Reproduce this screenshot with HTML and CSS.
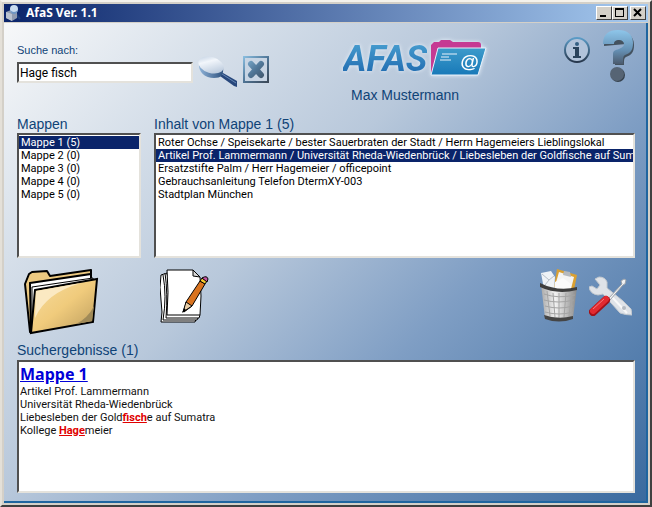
FILE: index.html
```
<!DOCTYPE html>
<html lang="de">
  <head>
    <meta charset="UTF-8" />
    <meta name="viewport" content="width=device-width, initial-scale=1.0" />
    <title>AfaS Ver. 1.1</title>
    <link rel="stylesheet" href="styles.css">
  </head>
  <body>
    <div class="window">
      <header class="titlebar">
        <svg class="app-icon" width="16" height="16" viewBox="0 0 16 16">
          <path d="M9 8l5 6" stroke="#1c3f7c" stroke-width="2" />
          <path d="M0 7l5-2 6 2v6l-5 3-6-3z" fill="#8f9bb0" />
          <path d="M0 7l6 2v7l-6-3z" fill="#b9c2d0" />
          <ellipse cx="8" cy="4" rx="4" ry="4" fill="#c9dcf0" />
          <path d="M4 5q4 4 8 0q-1 4-4 4t-4-4z" fill="#6f97c4" />
        </svg>
        <h1>AfaS Ver. 1.1</h1>
        <div class="window-buttons">
          <button type="button" aria-label="Minimieren">
            <svg width="12" height="10" viewBox="0 0 12 10"><path d="M2 7h6v2H2z" /></svg>
          </button>
          <button type="button" aria-label="Maximieren">
            <svg width="12" height="10" viewBox="0 0 12 10"><path d="M1 0h9v9H1zM2 2v6h7V2z" fill-rule="evenodd" /></svg>
          </button>
          <button type="button" class="close" aria-label="Schließen">
            <svg width="12" height="10" viewBox="0 0 12 10"><path d="M2 1l7 7M9 1L2 8" stroke="#000" stroke-width="2" /></svg>
          </button>
        </div>
      </header>

      <main class="content">
        <div class="top">
          <form class="search">
            <div class="search-field">
              <label for="search">Suche nach:</label>
              <input type="text" id="search" value="Hage fisch" autofocus />
            </div>
            <button type="button" class="icon-button" aria-label="Suchen">
              <svg width="40" height="32" viewBox="0 0 40 32">
                <defs>
                  <linearGradient id="lens" x1="0" y1="0" x2="1" y2="1">
                    <stop offset="0" stop-color="#b4c6dc" />
                    <stop offset=".35" stop-color="#f2f6fb" />
                    <stop offset="1" stop-color="#a9bcd3" />
                  </linearGradient>
                  <linearGradient id="rim" x1="0" y1="0" x2="1" y2="0">
                    <stop offset="0" stop-color="#8fb3d8" />
                    <stop offset="1" stop-color="#2e527f" />
                  </linearGradient>
                </defs>
                <path d="M22 18l3-1 14 8v6l-3-1-14-10z" fill="#27477c" />
                <path d="M24 18l14 9" stroke="#6587b3" stroke-width="1" />
                <path d="M1 7c-1 9 6 15 15 15 7 0 10-3 9-11z" fill="url(#rim)" />
                <ellipse cx="13" cy="9" rx="13" ry="8" transform="rotate(17 13 9)" fill="url(#lens)" />
              </svg>
            </button>
            <button type="button" class="icon-button" aria-label="Suche löschen">
              <svg width="26" height="27" viewBox="0 0 26 27">
                <defs>
                  <linearGradient id="steel" gradientUnits="userSpaceOnUse" x1="0" y1="0" x2="26" y2="27">
                    <stop offset="0" stop-color="#8cc0e2" />
                    <stop offset=".5" stop-color="#4f7596" />
                    <stop offset="1" stop-color="#3b4654" />
                  </linearGradient>
                </defs>
                <rect x="1" y="1" width="24" height="25" fill="#c8d5e4" stroke="url(#steel)" stroke-width="2" />
                <path d="M8 8l10 11M18 8L8 19" stroke="url(#steel)" stroke-width="6" stroke-linecap="round" />
              </svg>
            </button>
          </form>

          <div class="brand">
            <div class="logo">
              <span class="logo-text">AFAS</span>
              <svg width="60" height="40" viewBox="0 0 60 40">
                <defs>
                  <linearGradient id="folderBlue" x1="0" y1="0" x2="0" y2="1">
                    <stop offset="0" stop-color="#3d9bcb" />
                    <stop offset="1" stop-color="#1879b8" />
                  </linearGradient>
                </defs>
                <path d="M3 34V6l3-3h5l2-2h9l3 2h25q3 0 3 3v6" fill="#c63a93" />
                <path d="M10 9h48l-8 27H3z" fill="url(#folderBlue)" stroke="#e8f1fa" stroke-width="1" stroke-linejoin="round" />
                <path d="M14 15h15M13 18h8M12 21h11" stroke="#e8f1fa" stroke-width="1" />
                <text class="at" x="32" y="29">@</text>
              </svg>
            </div>
            <p class="user">Max Mustermann</p>
          </div>

          <div class="help">
            <button type="button" class="icon-button" aria-label="Information">
              <svg width="28" height="28" viewBox="0 0 28 28">
                <defs>
                  <linearGradient id="info" x1="0" y1="0" x2="0" y2="1">
                    <stop offset="0" stop-color="#5b9cc7" />
                    <stop offset="1" stop-color="#27374c" />
                  </linearGradient>
                </defs>
                <circle cx="14" cy="14" r="12" fill="#b1c3da" stroke="url(#info)" stroke-width="2" />
                <circle cx="14" cy="8" r="2" fill="#345f82" />
                <path d="M10 11h6v9h2v2h-8v-2h2v-7h-2z" fill="#2a435c" />
              </svg>
            </button>
            <button type="button" class="icon-button" aria-label="Hilfe">
              <svg width="33" height="53" viewBox="0 0 33 53">
                <defs>
                  <linearGradient id="question" x1="0" y1="0" x2="0" y2="1">
                    <stop offset="0" stop-color="#8ec6ea" />
                    <stop offset=".6" stop-color="#648fb3" />
                    <stop offset="1" stop-color="#4c5b6e" />
                  </linearGradient>
                </defs>
                <path d="M2 16C2 5 8 2 17 2s15 4 15 13c0 8-3 10-8 12-2 1-2 3-2 8h-9V25c0-3 2-4 6-5 4-2 5-3 5-6z" fill="#44525f" />
                <path d="M1 14C1 4 7 0 16 0s15 4 15 13c0 8-3 10-8 12-2 1-2 3-2 9H11V24c0-3 2-4 6-5 4-2 5-3 5-5s-2-4-5-4-5 1-5 4z" fill="url(#question)" />
                <circle cx="16" cy="45" r="7" fill="#35414d" />
                <circle cx="15" cy="44" r="7" fill="#566474" />
              </svg>
            </button>
          </div>
        </div>

        <div class="lists">
          <section class="folders">
            <label for="mappen">Mappen</label>
            <select id="mappen" size="9">
              <option selected>Mappe 1 (5)</option>
              <option>Mappe 2 (0)</option>
              <option>Mappe 3 (0)</option>
              <option>Mappe 4 (0)</option>
              <option>Mappe 5 (0)</option>
            </select>
          </section>
          <section class="entries">
            <label for="inhalt">Inhalt von Mappe 1 (5)</label>
            <select id="inhalt" size="9">
              <option>Roter Ochse / Speisekarte / bester Sauerbraten der Stadt / Herrn Hagemeiers Lieblingslokal</option>
              <option selected>Artikel Prof. Lammermann / Universität Rheda-Wiedenbrück / Liebesleben der Goldfische auf Sumatra</option>
              <option>Ersatzstifte Palm / Herr Hagemeier / officepoint</option>
              <option>Gebrauchsanleitung Telefon DtermXY-003</option>
              <option>Stadtplan München</option>
            </select>
          </section>
        </div>

        <div class="tools">
          <button type="button" class="icon-button tool-folder" aria-label="Neue Mappe">
            <svg width="76" height="66" viewBox="0 0 76 66">
              <defs>
                <linearGradient id="manila" x1="0" y1="0" x2="1" y2="1">
                  <stop offset="0" stop-color="#f8dda0" />
                  <stop offset=".5" stop-color="#f0cb7c" />
                  <stop offset="1" stop-color="#b99a5c" />
                </linearGradient>
              </defs>
              <path d="M6 63L1 15l4-10 3-2 15-1 3 5 41-6v10z" fill="#ecc981" stroke="#000" stroke-width="2" stroke-linejoin="round" />
              <path d="M6 14l61-9v12L7 62z" fill="#fff" stroke="#000" stroke-width="2" />
              <path d="M8 18l61-9v8L8 58z" fill="#fff" stroke="#000" stroke-width="1" />
              <path d="M11 21l62-11-4 43L7 64z" fill="url(#manila)" stroke="#000" stroke-width="2" />
              <path d="M12 22l45-8Q22 24 11 49z" fill="#fbe9c2" />
              <path d="M70 37l-2 15-16 3q12-6 18-18z" fill="#a08a58" />
            </svg>
          </button>
          <button type="button" class="icon-button tool-note" aria-label="Neuer Eintrag">
            <svg width="49" height="54" viewBox="0 0 49 54">
              <path d="M1 6l6-2 2 44 28-1-2 6H1q2-9 0-22t0-25z" fill="#fff" stroke="#000" stroke-width="1" />
              <path d="M3 6q4 21 0 45h34l2-4" fill="#fff" stroke="#000" stroke-width="1" />
              <path d="M5 4q3 20 1 45h33l1-3" fill="#fff" stroke="#000" stroke-width="1" />
              <path d="M7 1h26l7 7q2 19 0 38H7Q9 23 7 1z" fill="#fff" stroke="#000" stroke-width="1" />
              <path d="M33 1v6l7 1z" fill="#d8d8d8" stroke="#000" stroke-width="1" />
              <path d="M26 33l14-21 5 3-13 22-8 6z" fill="#d9731f" stroke="#000" stroke-width="1" />
              <path d="M26 33l6 4-9 6z" fill="#e9cda5" stroke="#000" stroke-width="1" />
              <path d="M24 39l2 2-4 3z" />
              <path d="M40 12l2-3 5 3-2 3z" fill="#f5c82c" stroke="#000" stroke-width="1" />
              <path d="M42 9q5-3 6 1l-1 3z" fill="#c355a2" stroke="#000" stroke-width="1" />
            </svg>
          </button>
          <button type="button" class="icon-button tool-trash" aria-label="Löschen">
            <svg width="38" height="53" viewBox="0 0 38 53">
              <defs>
                <linearGradient id="basket" x1="0" y1="0" x2="1" y2="0">
                  <stop offset="0" stop-color="#a9a9a9" />
                  <stop offset=".4" stop-color="#f1f1f1" />
                  <stop offset="1" stop-color="#8a8a8a" />
                </linearGradient>
              </defs>
              <path d="M17 0l20 6-3 15-20-3z" fill="#d9a032" />
              <path d="M19 3l15 5-3 12-16-3z" fill="#f4f4f4" />
              <path d="M24 2l6 1 1 5-8-2z" fill="#b5b9be" />
              <path d="M1 4l10-2 4 6-1 12H4z" fill="#eef2f6" />
              <path d="M2 5l7 6 5-4M5 16l4-5" stroke="#b6bec7" fill="none" />
              <path d="M15 13l8-4 8 6v8H14z" fill="#fafafa" />
              <path d="M1 15q18 11 36 3l-4 31q-14 6-28 0z" fill="url(#basket)" />
              <path d="M0 14q18 9 37 4v3q-20 5-37-3z" fill="#3d3d3d" />
              <path d="M4 25q14 5 31 1M4 31q14 4 30 0M5 37q14 4 28 0M5 43q14 4 28 0M7 22l3 25M13 24l2 24M19 24v25M26 24l-2 24M32 23l-3 24" stroke="#a4a4a4" fill="none" />
              <path d="M4 46q14 5 29 1v3q-14 5-28 0z" fill="#454545" />
            </svg>
          </button>
          <button type="button" class="icon-button tool-settings" aria-label="Einstellungen">
            <svg width="43" height="40" viewBox="0 0 43 40">
              <path d="M10 1L6 3l5 6-3 4-5-3-3 1q1 7 9 8l5-1 17 19q5 2 12 2l-1-6-8-8L18 12V6q-2-5-8-5z" fill="#dfe3e8" stroke="#c2c8ce" stroke-width="1" />
              <path d="M22 20l16 17" stroke="#f8f8f8" stroke-width="2" />
              <circle cx="35" cy="32" r="2" fill="#b4bac1" />
              <path d="M19 23L33 8l-1-3 3-2 2 1-1 4-2 1-13 15z" fill="#f2f2f2" stroke="#9aa2ab" stroke-width="1" />
              <path d="M4 36l13-12" stroke="#a31018" stroke-width="8" stroke-linecap="round" />
              <path d="M4 35l13-12" stroke="#e22a31" stroke-width="6" stroke-linecap="round" />
              <path d="M4 33l11-10" stroke="#f3797c" stroke-width="1" />
            </svg>
          </button>
        </div>

        <section class="results">
          <h2>Suchergebnisse (1)</h2>
          <div class="result-box">
            <a href="#mappen">Mappe 1</a>
            <p>Artikel Prof. Lammermann</p>
            <p>Universität Rheda-Wiedenbrück</p>
            <p>Liebesleben der Gold<mark>fisch</mark>e auf Sumatra</p>
            <p>Kollege <mark>Hage</mark>meier</p>
          </div>
        </section>
      </main>
    </div>
  </body>
</html>
```

FILE: styles.css
```
* {
  box-sizing: border-box;
}

body {
  margin: 0;
  font-family: "Liberation Sans", Arial, sans-serif;
  font-size: 11px;
  color: #0f4377;
}

h1, h2, p {
  margin: 0;
}

.window {
  display: flex;
  flex-direction: column;
  min-height: 100vh;
  padding: 2px;
  background: #d4d0c8;
  border: 2px solid;
  border-color: #f4f2ec #404040 #404040 #e4e0d8;
}

/* Titelleiste */
.titlebar {
  display: flex;
  align-items: center;
  gap: 4px;
  height: 18px;
  padding: 0 2px;
  background: linear-gradient(to right, #0a246a, #a6caf0);
}

.titlebar h1 {
  font-family: "Noto Sans", Tahoma, sans-serif;
  font-size: 12px;
  line-height: 18px;
  color: #fff;
}

.window-buttons {
  display: flex;
  margin-left: auto;
}

.window-buttons button {
  display: flex;
  width: 16px;
  height: 14px;
  padding: 1px;
  background: #d4d0c8;
  border: 1px solid;
  border-color: #fff #404040 #404040 #fff;
}

.window-buttons .close {
  margin-left: 2px;
}

.content {
  display: flex;
  flex: 1;
  flex-direction: column;
  margin-top: 1px;
  padding: 7px 11px 8px 13px;
  background: linear-gradient(135deg, #f7f8f9 0%, #dbe3ec 18%, #b8c8db 42%, #7f9ec4 65%, #3a6a9f 100%);
  border: solid #1f659f;
  border-width: 0 2px 2px 0;
}

.icon-button {
  display: block;
  flex: none;
  padding: 0;
  background: none;
  border: none;
  cursor: pointer;
}

.icon-button svg {
  display: block;
}

/* Kopfbereich */
.top {
  display: flex;
  height: 85px;
}

.search {
  display: flex;
  align-items: flex-start;
  gap: 5px;
  padding-top: 12px;
}

.search .icon-button {
  margin-top: 14px;
}

.search-field {
  width: 176px;
}

.search-field label {
  display: block;
  margin-bottom: 4px;
  line-height: 16px;
}

.search-field input {
  display: block;
  width: 100%;
  height: 21px;
  padding: 0 1px;
  font-family: Roboto, sans-serif;
  font-size: 12px;
  background: #fff;
  border: 2px solid;
  border-color: #505050 #e4e2dc #e4e2dc #505050;
  outline: none;
}

.brand {
  margin-left: 74px;
  padding-top: 9px;
}

.logo {
  display: flex;
  align-items: center;
  gap: 1px;
  filter: drop-shadow(0 0 2px #e8f1fa);
}

.logo-text {
  font-family: Roboto, sans-serif;
  font-size: 36px;
  font-weight: bold;
  font-style: italic;
  line-height: 40px;
  color: transparent;
  background: linear-gradient(#4ba3d3, #1a63ab);
  background-clip: text;
}

.at {
  font-size: 19px;
  font-weight: bold;
  font-style: italic;
  fill: #fff;
}

.user {
  padding-left: 8px;
  font-size: 14px;
  line-height: 32px;
}

.help {
  display: flex;
  align-items: flex-start;
  gap: 11px;
  margin-left: auto;
}

.help .icon-button:first-child {
  margin-top: 6px;
}

/* Listen */
.lists {
  display: flex;
  gap: 13px;
}

.folders {
  width: 124px;
}

.entries {
  flex: 1;
  min-width: 0;
}

.lists label,
.results h2 {
  display: block;
  font-size: 14px;
  font-weight: normal;
  line-height: 18px;
}

.lists select {
  display: block;
  width: 100%;
  height: 125px;
  padding: 1px 0;
  overflow: hidden;
  font-family: Roboto, sans-serif;
  font-size: 11px;
  color: #000;
  background: #fff;
  border: 2px solid;
  border-color: #505050 #e4e2dc #e4e2dc #505050;
  border-radius: 0;
  outline: none;
}

.lists option {
  min-height: 13px;
  padding: 0 2px;
  line-height: 13px;
}

.lists option:checked {
  color: #fff;
  background: #0a246a linear-gradient(#0a246a, #0a246a);
}

/* Werkzeuge */
.tools {
  display: flex;
  align-items: flex-start;
  height: 82px;
  padding: 11px 3px 0 7px;
}

.tool-note {
  margin-left: 60px;
}

.tool-trash {
  margin-left: auto;
}

.tool-settings {
  margin: 7px 0 0 11px;
}

/* Suchergebnisse */
.results {
  display: flex;
  flex: 1;
  flex-direction: column;
}

.results h2 {
  line-height: 20px;
}

.result-box {
  flex: 1;
  padding: 1px;
  font-family: Roboto, sans-serif;
  line-height: 13px;
  color: #111;
  background: #fff;
  border: 2px solid;
  border-color: #505050 #e4e2dc #e4e2dc #505050;
}

.result-box a {
  display: block;
  width: fit-content;
  font-family: "Noto Sans", Tahoma, sans-serif;
  font-size: 16px;
  font-weight: bold;
  line-height: 22px;
  color: #0000d8;
}

.result-box mark {
  font-weight: bold;
  color: #e00000;
  text-decoration: underline;
  background: none;
}
```
